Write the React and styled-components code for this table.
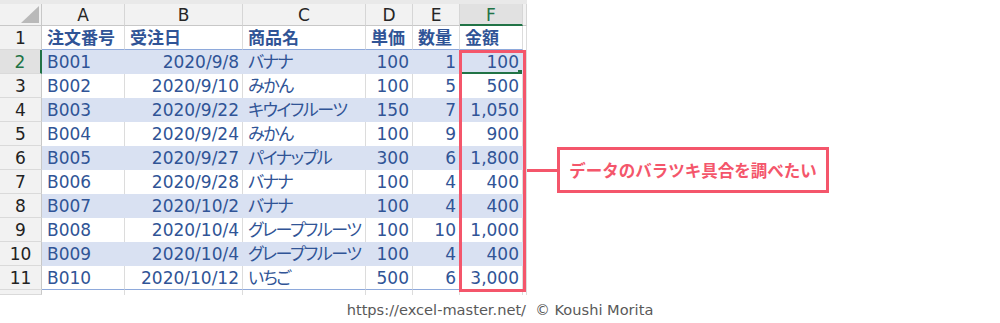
import React from 'react';
import styled, { createGlobalStyle } from 'styled-components';

const GlobalStyle = createGlobalStyle`
  body {
    margin: 0;
    background: #fff;
    font-family: "DejaVu Sans", "Noto Sans CJK JP", sans-serif;
  }
`;

const RED = '#f4566b';
const GREEN = '#217346';
const BLUE_TEXT = '#305496';
const BAND = '#d9e1f2';
const TABLE_LINE = '#8ea9db';

const Page = styled.div`
  width: 1000px;
  height: 323px;
  overflow: hidden;
`;

const Top = styled.div`
  display: flex;
  align-items: flex-start;
`;

const SheetWrap = styled.div`
  position: relative;
  width: 527px;
  padding-top: 4px;
  background: #e9e9e9;
`;

const Sheet = styled.div`
  display: grid;
  grid-template-columns: 42px 83px 118px 123px 47px 47px 63px 4px;
  grid-template-rows: 22px repeat(11, 24px) 5px;
  background: #fff;
`;

const Corner = styled.div`
  background: #f2f2f2;
  border-right: 1px solid #c8c8c8;
  border-bottom: 1px solid #c8c8c8;
  box-sizing: border-box;
  display: flex;
  align-items: flex-end;
  justify-content: flex-end;
  padding: 0 2px 2px 0;
`;

const ColHead = styled.div`
  box-sizing: border-box;
  background: ${p => (p.$sel ? '#e1e1e1' : '#f2f2f2')};
  color: ${p => (p.$sel ? GREEN : '#262626')};
  border-right: 1px solid #d6d6d6;
  border-bottom: ${p => (p.$sel ? `2px solid ${GREEN}` : '1px solid #c8c8c8')};
  font-size: 17px;
  line-height: 22px;
  text-align: center;
`;

const RowHead = styled.div`
  box-sizing: border-box;
  background: ${p => (p.$sel ? '#e1e1e1' : '#f2f2f2')};
  color: ${p => (p.$sel ? GREEN : '#222')};
  border-right: ${p => (p.$sel ? `2px solid ${GREEN}` : '1px solid #c8c8c8')};
  border-bottom: 1px solid #dadada;
  font-size: 17px;
  line-height: 24px;
  text-align: center;
  overflow: hidden;
`;

const Cell = styled.div`
  position: relative;
  box-sizing: border-box;
  padding: 0 3px 0 5px;
  background: ${p => (p.$band ? BAND : '#fff')};
  color: ${BLUE_TEXT};
  font-size: 17px;
  font-weight: ${p => (p.$bold ? 700 : 400)};
  font-feature-settings: "palt";
  letter-spacing: ${p => (p.$kana ? '-1.4px' : 'normal')};
  line-height: 24px;
  text-align: ${p => p.$align || 'left'};
  white-space: nowrap;
  overflow: hidden;
  border-right: 1px solid ${p => (p.$band ? BAND : '#dcdcdc')};
  border-bottom: ${p => (p.$line ? `1px solid ${TABLE_LINE}` : 'none')};
  ${p => p.$active && `box-shadow: inset 0 -2px 0 ${GREEN};`}
`;

const PlainCell = styled.div`
  box-sizing: border-box;
  background: #fff;
  border-right: 1px solid #dcdcdc;
`;

const Handle = styled.span`
  position: absolute;
  right: 0;
  bottom: 0;
  width: 4px;
  height: 4px;
  background: ${GREEN};
`;

const Highlight = styled.div`
  position: absolute;
  left: 459px;
  top: 50px;
  width: 67px;
  height: 242px;
  box-sizing: border-box;
  border: 3px solid ${RED};
  pointer-events: none;
`;

const Annotation = styled.div`
  display: flex;
  align-items: center;
  margin-top: 147px;
  margin-left: -1px;
`;

const Connector = styled.div`
  width: 31px;
  height: 3px;
  background: ${RED};
`;

const Label = styled.div`
  width: 272px;
  height: 46px;
  box-sizing: border-box;
  border: 3px solid ${RED};
  display: flex;
  align-items: center;
  justify-content: center;
  color: ${RED};
  font-family: "Noto Sans CJK JP", sans-serif;
  font-weight: 700;
  font-size: 16.5px;
`;

const Footer = styled.div`
  margin-top: 5px;
  text-align: center;
  color: #595959;
  font-size: 14.6px;
  line-height: 20px;
`;

const columns = ['A', 'B', 'C', 'D', 'E', 'F'];
const aligns = ['left', 'right', 'left', 'right', 'right', 'right'];
const headers = ['注文番号', '受注日', '商品名', '単価', '数量', '金額'];

const rows = [
  ['B001', '2020/9/8', 'バナナ', '100', '1', '100'],
  ['B002', '2020/9/10', 'みかん', '100', '5', '500'],
  ['B003', '2020/9/22', 'キウイフルーツ', '150', '7', '1,050'],
  ['B004', '2020/9/24', 'みかん', '100', '9', '900'],
  ['B005', '2020/9/27', 'パイナップル', '300', '6', '1,800'],
  ['B006', '2020/9/28', 'バナナ', '100', '4', '400'],
  ['B007', '2020/10/2', 'バナナ', '100', '4', '400'],
  ['B008', '2020/10/4', 'グレープフルーツ', '100', '10', '1,000'],
  ['B009', '2020/10/4', 'グレープフルーツ', '100', '4', '400'],
  ['B010', '2020/10/12', 'いちご', '500', '6', '3,000'],
];

const CornerMark = () => (
  <svg width="18" height="17" viewBox="0 0 18 17">
    <polygon points="18,0 18,17 0,17" fill="#b9b9b9" />
  </svg>
);

export default function App() {
  return (
    <Page>
      <GlobalStyle />
      <Top>
        <SheetWrap>
          <Sheet>
            <Corner><CornerMark /></Corner>
            {columns.map(c => (
              <ColHead key={c} $sel={c === 'F'}>{c}</ColHead>
            ))}
            <ColHead />

            <RowHead>1</RowHead>
            {headers.map(h => (
              <Cell key={h} $bold $line>{h}</Cell>
            ))}
            <PlainCell />

            {rows.map((r, i) => {
              const band = i % 2 === 0;
              const last = i === rows.length - 1;
              return (
                <React.Fragment key={r[0]}>
                  <RowHead $sel={i === 0}>{i + 2}</RowHead>
                  {r.map((v, j) => {
                    const active = i === 0 && j === 5;
                    return (
                      <Cell
                        key={j}
                        $band={band}
                        $align={aligns[j]}
                        $kana={j === 2}
                        $line={last}
                        $active={active}
                      >
                        {v}
                        {active && <Handle />}
                      </Cell>
                    );
                  })}
                  <PlainCell />
                </React.Fragment>
              );
            })}

            <RowHead />
            {columns.map(c => <PlainCell key={c} />)}
            <PlainCell />
          </Sheet>
          <Highlight />
        </SheetWrap>
        <Annotation>
          <Connector />
          <Label>データのバラツキ具合を調べたい</Label>
        </Annotation>
      </Top>
      <Footer>https://excel-master.net/&nbsp; © Koushi Morita</Footer>
    </Page>
  );
}
